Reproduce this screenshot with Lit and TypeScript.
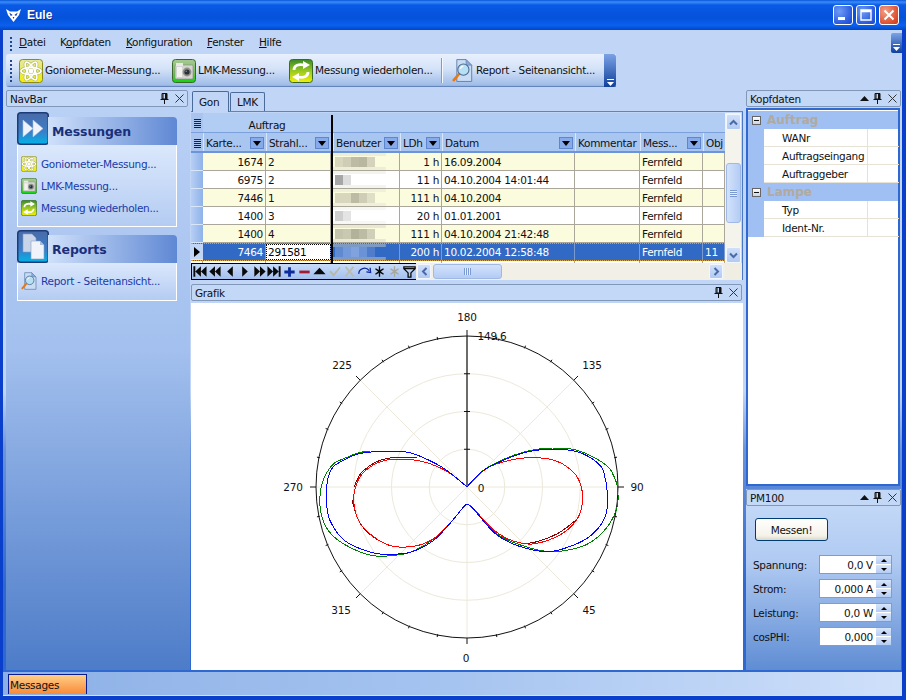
import { LitElement, html, css, svg } from "lit";
import { customElement } from "lit/decorators.js";

const atom = (s: number) => html`<svg width=${s} height=${s} viewBox="0 0 24 24"><defs><linearGradient id="ya" x1="0" y1="0" x2="0" y2="1"><stop offset="0" stop-color="#e6ea9c"/><stop offset=".55" stop-color="#e8ea50"/><stop offset="1" stop-color="#f2f000"/></linearGradient></defs><rect x=".5" y=".5" width="23" height="23" rx="3" fill="url(#ya)" stroke="#8a8a20"/><g fill="none" stroke="#a8ae50" stroke-width="2.8"><ellipse cx="12" cy="12" rx="10" ry="3.6"/><ellipse cx="12" cy="12" rx="10" ry="3.6" transform="rotate(60 12 12)"/><ellipse cx="12" cy="12" rx="10" ry="3.6" transform="rotate(120 12 12)"/></g><g fill="none" stroke="#fff" stroke-width="1.7"><ellipse cx="12" cy="12" rx="10" ry="3.6"/><ellipse cx="12" cy="12" rx="10" ry="3.6" transform="rotate(60 12 12)"/><ellipse cx="12" cy="12" rx="10" ry="3.6" transform="rotate(120 12 12)"/></g><circle cx="12" cy="12" r="2.4" fill="#fff"/></svg>`;
const camera = (s: number) => html`<svg width=${s} height=${s} viewBox="0 0 24 24"><defs><linearGradient id="gc" x1="0" y1="0" x2="0" y2="1"><stop offset="0" stop-color="#a8c898"/><stop offset=".6" stop-color="#70c050"/><stop offset="1" stop-color="#08d808"/></linearGradient></defs><rect x=".5" y=".5" width="23" height="23" rx="3" fill="url(#gc)" stroke="#3a6a2a"/><rect x="3" y="6" width="18" height="14" rx="1" fill="#d4d4d0" stroke="#85857f" stroke-width=".6"/><rect x="4" y="4" width="7" height="3" fill="#e8e8e4"/><rect x="5" y="8" width="5" height="10" fill="#f2f2ee"/><circle cx="15" cy="13" r="4.4" fill="#8e9088"/><circle cx="15" cy="13" r="2.6" fill="#2c3034"/><circle cx="14.2" cy="12.2" r=".8" fill="#7090b0"/></svg>`;
const refresh = (s: number) => html`<svg width=${s} height=${s} viewBox="0 0 24 24"><defs><linearGradient id="gr" x1="0" y1="0" x2="0" y2="1"><stop offset="0" stop-color="#3a8a28"/><stop offset=".5" stop-color="#9ac820"/><stop offset="1" stop-color="#f4f200"/></linearGradient></defs><rect x=".5" y=".5" width="23" height="23" rx="3" fill="url(#gr)" stroke="#3a6a2a"/><g fill="none" stroke="#fff" stroke-width="2.8"><path d="M5 11 C5 6 10 5 15 6"/><path d="M19 13 C19 18 14 19 9 18"/></g><path d="M14 2 L21 6 L14 10 Z" fill="#fff"/><path d="M10 14 L3 18 L10 22 Z" fill="#fff"/></svg>`;
const report = (s: number) => html`<svg width=${s} height=${s + 2} viewBox="0 0 24 26"><path d="M5.5 .5 H16 L22.5 7 V25.5 H5.5 Z" fill="#c8dcf4" stroke="#5a78a8"/><path d="M16 .5 V7 H22.5 Z" fill="#88a8d8" stroke="#5a78a8" stroke-width=".6"/><path d="M2 24 L8 17" stroke="#e87810" stroke-width="3" stroke-linecap="round"/><circle cx="13" cy="12" r="6.4" fill="#b8e0f4" stroke="#4a6a90" stroke-width="1.2"/><path d="M9.5 11 A4 4 0 0 1 13 8" stroke="#fff" stroke-width="1.4" fill="none"/></svg>`;
const bigArrows = html`<svg width="32" height="33" viewBox="0 0 32 33"><defs><linearGradient id="bi" x1="0" y1="0" x2="0" y2="1"><stop offset="0" stop-color="#4a6aa8"/><stop offset=".6" stop-color="#3a7ec8"/><stop offset="1" stop-color="#00b4e8"/></linearGradient></defs><rect x=".75" y=".75" width="30.5" height="31.5" rx="3" fill="url(#bi)" stroke="#1c3c78" stroke-width="1.5"/><path d="M6 8 L16 16.5 L6 25 Z M16 8 L26 16.5 L16 25 Z" fill="#f0f4fa" stroke="#a8c0e0" stroke-width=".6"/></svg>`;
const bigPages = html`<svg width="32" height="33" viewBox="0 0 32 33"><rect x=".75" y=".75" width="30.5" height="31.5" rx="3" fill="url(#bi)" stroke="#1c3c78" stroke-width="1.5"/><path d="M6 4 H15 L19 8 V22 H6 Z" fill="#c8d4e8" stroke="#8aa0c0" stroke-width=".6"/><path d="M14 11 H23 L27 15 V29 H14 Z" fill="#f0f4fa" stroke="#8aa0c0" stroke-width=".6"/><path d="M23 11 V15 H27 Z" fill="#a8bcd8"/></svg>`;
const owl = html`<svg width="15" height="13" viewBox="0 0 15 13"><path d="M0 0 L4 2.5 H11 L15 0 L13 6 L7.5 13 L2 6 Z" fill="#fff"/><path d="M3.2 3.6 L6.6 6 L4.8 7 Z M11.8 3.6 L8.4 6 L10.2 7 Z M6.6 8 H8.4 L7.5 10 Z" fill="#0a3ab0"/></svg>`;
const pin = html`<svg class="hico" width="9" height="11" viewBox="0 0 9 11"><path d="M2 0.5 H7 V6 H2 Z M3 1 V6 M0.5 6.5 H8.5 M4.5 7 V11" fill="none" stroke="#111" stroke-width="1"/><rect x="5" y="1" width="2" height="5" fill="#111"/></svg>`;
const closeX = html`<svg class="hico" width="9" height="9" viewBox="0 0 9 9"><path d="M.5 .5 L8.5 8.5 M8.5 .5 L.5 8.5" stroke="#333" stroke-width="1"/></svg>`;
const upTri = html`<svg class="hico" width="9" height="5" viewBox="0 0 9 5"><path d="M4.5 0 L9 5 H0 Z" fill="#111"/></svg>`;
const chev = html`<svg width="9" height="9" viewBox="0 0 9 9"><path d="M1 1 H8 V2 H1 Z" fill="#fff"/><path d="M1 4 H8 L4.5 8 Z" fill="#fff"/></svg>`;

const navIcons: [string, string, string][] = [
  ["M1 2 H3 V13 H1 Z M9 2 V13 L3 7.5 Z M15 2 V13 L9 7.5 Z", "#0a0a0a", ""],
  ["M8 2 V13 L2 7.5 Z M14 2 V13 L8 7.5 Z", "#0a0a0a", ""],
  ["M11 2 V13 L5 7.5 Z", "#0a0a0a", ""],
  ["M5 2 V13 L11 7.5 Z", "#0a0a0a", ""],
  ["M2 2 V13 L8 7.5 Z M8 2 V13 L14 7.5 Z", "#0a0a0a", ""],
  ["M0 2 V13 L6 7.5 Z M6 2 V13 L12 7.5 Z M12 2 H14 V13 H12 Z", "#0a0a0a", ""],
  ["M6 3 H9 V6.5 H13 V9.5 H9 V13 H6 V9.5 H2 V6.5 H6 Z", "#0c2c9c", ""],
  ["M2 6.5 H13 V9.5 H2 Z", "#a01c30", ""],
  ["M7.5 3.5 L14 10.5 H1 Z", "#0a0a0a", ""],
  ["M2 8 L3.5 6.5 L6.5 10 L13 2.5 L14 3.5 L6.5 13 Z", "#b8b8a8", ""],
  ["M2.5 3 L4 2 L7.5 6 L11 2 L12.5 3 L9 7.5 L12.5 12 L11 13 L7.5 9 L4 13 L2.5 12 L6 7.5 Z", "#bcbcb0", ""],
  ["", "#0c2c9c", "M1.5 10 C1 4 9 2 12.5 6.5 M9.5 8 L14 8.5 L13.5 3.5"],
  ["M6.8 2 H8.2 V6 L11.5 4 L12.2 5.2 L9 7.5 L12.2 9.8 L11.5 11 L8.2 9 V13 H6.8 V9 L3.5 11 L2.8 9.8 L6 7.5 L2.8 5.2 L3.5 4 L6.8 6 Z", "#0a0a0a", ""],
  ["M6.8 2 H8.2 V6 L11.5 4 L12.2 5.2 L9 7.5 L12.2 9.8 L11.5 11 L8.2 9 V13 H6.8 V9 L3.5 11 L2.8 9.8 L6 7.5 L2.8 5.2 L3.5 4 L6.8 6 Z", "#a8a89c", ""],
  ["", "#0a0a0a", "M1.5 2.5 H13.5 V4.5 L9 9 V13.5 H6 V9 L1.5 4.5 Z M1.5 4.5 H13.5"],
];

const rows = [
  { k: "1674", s: "2", l: "1 h", d: "16.09.2004", m: "Fernfeld", o: "", mos: ["#d8d7be", "#cfcdb5", "#bdbba3", "#b9b7a0", "#d5d3bb"], band: "#eeedd8" },
  { k: "6975", s: "2", l: "11 h", d: "04.10.2004 14:01:44", m: "Fernfeld", o: "", mos: ["#a6a6a6", "#dcdcdc"], band: "#f4f4ee" },
  { k: "7446", s: "1", l: "111 h", d: "04.10.2004", m: "Fernfeld", o: "", mos: ["#d8d7be", "#d8d7be", "#bdbba3", "#cfcdb5", "#dfdec6"], band: "#f0efd9" },
  { k: "1400", s: "3", l: "20 h", d: "01.01.2001", m: "Fernfeld", o: "", mos: ["#cfcfcf", "#e4e4e4"], band: "#f7f7f4" },
  { k: "1400", s: "4", l: "111 h", d: "04.10.2004 21:42:48", m: "Fernfeld", o: "", mos: ["#c4c3ab", "#c9c8b0", "#b2b19a", "#bcbba3", "#d0cfb7"], band: "#e9e8d2" },
  { k: "7464", s: "291581", l: "200 h", d: "10.02.2004 12:58:48", m: "Fernfeld", o: "11", mos: ["#5f8ad2", "#7399da", "#80a2de", "#6a92d6", "#4f7ccb"], band: "#7d9ac4" },
];

const blue = [[467,487],[482,470],[508,458],[525,452],[545,449],[575,450],[592,458],[603,468],[605,478],[607,487],[608,508],[603,523],[590,537],[575,545],[550,553],[522,548],[498,537],[485,523],[472,507],[467,504],[465,505],[457,515],[447,527],[433,542],[413,552],[400,554],[380,555],[357,548],[343,540],[335,530],[328,517],[326,500],[327,480],[332,467],[340,462],[360,452],[400,451],[413,453],[433,462],[447,470],[467,487]];
const green = [[467,487],[482,470],[508,457],[527,451],[545,448],[565,448],[582,451],[608,465],[614,476],[618,487],[618,508],[608,527],[595,540],[580,548],[550,553],[522,546],[498,536],[485,522],[472,506],[467,504],[465,505],[457,515],[447,527],[433,540],[413,552],[400,555],[373,557],[350,548],[333,537],[323,523],[319,503],[322,480],[333,463],[343,459],[362,451],[385,451],[400,451],[413,453],[433,462],[447,470],[467,487]];
const red = [[467,487],[485,468],[505,461],[528,457],[555,459],[575,472],[582,487],[583,503],[578,520],[562,535],[538,544],[522,544],[502,537],[485,522],[472,507],[467,504],[465,505],[457,515],[447,527],[433,540],[415,547],[390,547],[370,535],[357,520],[353,500],[355,487],[362,472],[383,459],[417,459],[447,470],[467,487]];
const dark = [[467,487],[485,468],[505,460],[528,456],[555,458],[575,471],[581,487],[582,505],[576,520],[560,533],[538,542],[522,544],[502,536],[485,522],[472,507],[467,504],[465,505],[457,515],[447,526],[433,539],[415,546],[390,546],[372,537],[358,522],[352,500],[354,487],[361,471],[384,457],[417,458],[447,470],[467,487]];
const darkParts = [dark.slice(8, 12), dark.slice(21, 25), dark.slice(25, 29)];
const smooth = (p: number[][]) => {
  let cur = p;
  for (let it = 0; it < 2; it++) {
    const out: number[][] = [cur[0]];
    for (let i = 0; i < cur.length - 1; i++) {
      const a = cur[i], b = cur[i + 1];
      out.push([0.75 * a[0] + 0.25 * b[0], 0.75 * a[1] + 0.25 * b[1]]);
      out.push([0.25 * a[0] + 0.75 * b[0], 0.25 * a[1] + 0.75 * b[1]]);
    }
    out.push(cur[cur.length - 1]);
    cur = out;
  }
  return cur;
};
const pts = (p: number[][]) => smooth(p).map((q) => q.map((v) => v.toFixed(1)).join(",")).join(" ");

const chart = () => {
  const cx = 467, cy = 487, R = 151;
  const spokes = [0, 45, 90, 135, 180, 225, 270, 315];
  const ticks = [];
  for (let i = 0; i < 32; i++) {
    const a = (i * 11.25 * Math.PI) / 180;
    const big = i % 4 === 0;
    const r1 = R - (big ? 0 : 1), r2 = R + (big ? 6 : 2);
    ticks.push(svg`<line x1=${cx + r1 * Math.sin(a)} y1=${cy - r1 * Math.cos(a)} x2=${cx + r2 * Math.sin(a)} y2=${cy - r2 * Math.cos(a)} stroke="#111"/>`);
  }
  const labels: [string, number, number][] = [["180",467,321],["135",592,369],["90",637,491],["45",589,614],["0",466,662],["315",341,614],["270",293,491],["225",342,369],["0",481,492],["149,6",492,340]];
  return html`<svg class="chart" width="552" height="367" viewBox="191 303 552 367">
    ${[37.75, 75.5, 113.25].map((r) => svg`<circle cx=${cx} cy=${cy} r=${r} fill="none" stroke="#ece8da"/>`)}
    ${spokes.map((d) => { const a = (d * Math.PI) / 180; return svg`<line x1=${cx} y1=${cy} x2=${cx + R * Math.sin(a)} y2=${cy - R * Math.cos(a)} stroke="#ece8da"/>`; })}
    <circle cx=${cx} cy=${cy} r=${R} fill="none" stroke="#111"/>
    ${ticks}
    <line x1=${cx} y1=${cy} x2=${cx} y2=${cy - R} stroke="#111" stroke-width="1.2"/>
    ${[1, 2, 3].map((i) => svg`<line x1=${cx - 3} y1=${cy - 37.75 * i} x2=${cx + 3} y2=${cy - 37.75 * i} stroke="#111"/>`)}
    <g class="curves">
      <polyline points=${pts(green)} fill="none" stroke="#008000"/>
      ${darkParts.map((p) => svg`<polyline points=${pts(p)} fill="none" stroke="#8a0000"/>`)}
      <polyline points=${pts(red)} fill="none" stroke="#ff0000"/>
      <polyline points=${pts(blue)} fill="none" stroke="#0000ff"/>
    </g>
    ${labels.map(([t, x, y]) => svg`<text x=${x} y=${y} text-anchor="middle">${t}</text>`)}
  </svg>`;
};

@customElement("app-root")
export class AppRoot extends LitElement {
  static styles = css`
    :host { display: block; width: 906px; height: 700px; font: 10.5px "DejaVu Sans", sans-serif; color: #111; overflow: hidden; letter-spacing: -0.3px; }
    svg { display: block; flex: none; }
    .window { width: 906px; height: 700px; display: flex; flex-direction: column; background: #0a3fcb; }
    .title { height: 30px; flex: none; display: flex; align-items: center; padding: 0 7px 0 6px; gap: 6px; background: linear-gradient(#0a56d8 0, #3a8cf8 2px, #0a5ae6 5px, #0552da 60%, #0a60ee 85%, #0344c4 100%); }
    .title b { font: bold 12px "Liberation Sans", sans-serif; letter-spacing: 0; color: #fff; text-shadow: 1px 1px 0 #0a2a90; flex: 1; }
    .wbtns { display: flex; gap: 3px; }
    .wb { width: 20px; height: 20px; border: 1px solid #fff; border-radius: 3px; background: radial-gradient(circle at 30% 30%, #6f9cf4, #2a5ae0 70%, #1c48c8); box-sizing: border-box; display: flex; align-items: center; justify-content: center; }
    .wb.x { background: radial-gradient(circle at 30% 30%, #f0a088, #dd5030 70%, #c83c18); }
    .client { flex: 1; min-height: 0; margin: 0 4px 4px 3px; display: flex; flex-direction: column; background: #c1d6f6; }
    .menubar { height: 24px; flex: none; display: flex; align-items: center; padding-left: 7px; }
    .grip { width: 2px; height: 2px; flex: none; background: #1f4690; box-shadow: 0 4px 0 #1f4690, 0 8px 0 #1f4690, 0 -4px 0 #1f4690; }
    .menus { display: flex; margin-left: 7px; flex: 1; }
    .menus span { display: block; }
    .menus span u { text-decoration: underline; }
    .m1 { width: 41px; } .m2 { width: 66px; } .m3 { width: 81px; } .m4 { width: 52px; } .m5 { width: 40px; }
    .mchev { width: 11px; height: 20px; margin-top: 1px; background: linear-gradient(#7ba2e4, #10409c); display: flex; align-items: flex-end; justify-content: center; border-radius: 2px 0 0 2px; padding-bottom: 1px; box-sizing: border-box; }
    .toolrow { height: 33px; flex: none; display: flex; padding-left: 3px; }
    .toolbar { width: 610px; display: flex; align-items: center; background: linear-gradient(#e8f0fd, #d4e2f8 45%, #9fbce8 95%, #4a6eaa 100%); border-radius: 3px 0 0 3px; position: relative; padding-left: 4px; box-sizing: border-box; }
    .toolbar .grip { box-shadow: 0 4px 0 #1f4690, 0 8px 0 #1f4690, 0 -4px 0 #1f4690, 0 -8px 0 #1f4690, 0 12px 0 #1f4690; margin-right: 7px; margin-top: -4px; }
    .tb { display: flex; align-items: center; gap: 2px; white-space: nowrap; }
    .tb span { margin-top: -2px; }
    .tb1 { width: 153px; } .tb2 { width: 117px; } .tb3 { width: 152px; }
    .sep { width: 1px; height: 25px; background: #7c9ccc; border-right: 1px solid #f4f8ff; margin-right: 9px; }
    .tb4 { gap: 3px; flex: 1; }
    .tchev { width: 12px; align-self: stretch; flex: none; background: linear-gradient(#7ba2e4, #10409c); border-radius: 0 3px 3px 0; display: flex; align-items: flex-end; justify-content: center; }
    .dock { flex: 1; min-height: 0; display: flex; background: linear-gradient(#c1d6f6 0, #c1d6f6 52%, #6a95dc 62%, #2f68d0 85%, #2f68d0 100%); padding-bottom: 2px; }
    .left { width: 184px; margin-left: 3px; flex: none; display: flex; flex-direction: column; background: linear-gradient(#bcd2f6, #a3c0ee 45%, #4d7cc8); padding-top: 3px; box-sizing: border-box; }
    .ph { height: 17px; flex: none; box-sizing: border-box; margin: 0 2px 0 0; border: 1px solid #8298b8; border-radius: 2px; display: flex; align-items: center; gap: 4px; padding: 0 3px; background: #c3d8f7; }
    .ph span { flex: 1; }
    .hico { flex: none; }
    .hico:last-child { margin-left: 2px; }
    .pane { margin: 6px 13px 0 11px; display: flex; flex-direction: column; flex: none; }
    .pane + .pane { margin-top: 4px; }
    .ptop { height: 32px; display: flex; align-items: flex-end; }
    .ptitle { flex: 1; height: 28px; margin-left: -1px; box-sizing: border-box; display: flex; align-items: center; padding-left: 4px; font: bold 12.5px "DejaVu Sans", sans-serif; letter-spacing: -0.1px; color: #1a2f7a; background: linear-gradient(90deg, #cfe0fa, #5f88d4); border-radius: 0 4px 0 0; }
    .pbody { border: 1px solid #fff; border-top: none; background: linear-gradient(#dbe8fc, #b4ccf2); padding: 11px 0 0 3px; display: flex; flex-direction: column; gap: 6px; box-sizing: border-box; }
    .p1 { height: 82px; } .p2 { height: 38px; padding-top: 10px; }
    .pi { display: flex; align-items: center; gap: 4px; color: #1a3aa8; height: 16px; }
    .center { width: 552px; margin-left: 1px; flex: none; display: flex; flex-direction: column; }
    .tabs { height: 25px; flex: none; display: flex; align-items: flex-end; padding-left: 1px; border-bottom: 1px solid #5b83c8; box-sizing: border-box; }
    .tab { height: 19px; box-sizing: border-box; padding: 0 6px; display: flex; align-items: center; border: 1px solid #4a6a9a; border-bottom: none; border-radius: 2px 2px 0 0; margin-right: 1px; }
    .tab.on { height: 21px; background: #c1d6f6; margin-bottom: -1px; width: 37px; padding: 0 6px; }
    .grid { flex: none; height: 168px; display: flex; border-right: 1px solid #4a78c8; background: #c1d6f6; position: relative; padding-top: 1px; box-sizing: border-box; }
    .gmain { width: 534px; flex: none; display: flex; flex-direction: column; position: relative; }
    .thick { position: absolute; left: 140px; top: 2px; width: 2px; height: 148px; background: #000; z-index: 3; }
    .r { display: grid; grid-template-columns: 12px 63px 65px 2px 67px 42px 133px 65px 63px 22px; flex: none; box-sizing: border-box; }
    .group { height: 20px; background: #b2cdf3; border-bottom: 1px solid #7ba0dc; }
    .group .sel, .hdr .sel { background: #a8c4ef; display: flex; align-items: center; justify-content: center; padding-top: 2px; box-sizing: border-box; }
    .ag { grid-column: 2 / 4; text-align: center; align-self: center; padding-top: 4px; }
    .gl { width: 7px; height: 9px; background: repeating-linear-gradient(#222 0 1px, transparent 1px 2px); border-left: 1px dotted #222; box-sizing: border-box; }
    .hdr { height: 20px; background: #a9c6f1; border-bottom: 2px solid #6e94d8; }
    .h { display: flex; align-items: center; overflow: hidden; white-space: nowrap; padding: 2px 0 0 2px; border-left: 1px solid #d8e6fa; box-sizing: border-box; }
    .h span { flex: 1; overflow: hidden; }
    .dd { width: 14px; height: 12px; flex: none; margin-right: 2px; background: #86aaea; border: 1px solid #5d86cc; box-sizing: border-box; display: flex; align-items: center; justify-content: center; }
    .dd i { width: 0; height: 0; border: 4px solid transparent; border-top: 5px solid #000; border-bottom: none; }
    .row { height: 18px; background: #fff; }
    .row.alt { background: #fbfbde; }
    .c { display: flex; align-items: center; border-right: 1px solid #aaa79a; border-bottom: 1px solid #aaa79a; padding: 0 2px; box-sizing: border-box; overflow: hidden; white-space: nowrap; }
    .c.n { justify-content: flex-end; }
    .sel2 { background: linear-gradient(90deg, #b6cff4, #8fb2ea); border-bottom: 1px solid #d8e6fa; display: flex; align-items: center; justify-content: center; }
    .sel2 i { width: 0; height: 0; border: 5px solid transparent; border-left: 6px solid #000; border-right: none; }
    .row.cur { background: #316ac5; color: #fff; border-top: 1px dotted #e0a040; border-bottom: 1px dotted #e0a040; }
    .row.cur .c { border-bottom: none; border-right-color: #7a9ad0; }
    .row.cur .sel2 { background: #c1d6f6; }
    .row.cur .edit { background: #fff; color: #000; outline: 1px dotted #000; outline-offset: -1px; }
    .blur { display: flex; padding: 0 0 0 2px; align-items: center; background-repeat: no-repeat; }
    .mos { width: 8px; height: 10px; flex: none; }
    .partial { height: 2px; display: grid; grid-template-columns: 12px 63px 65px 2px 67px 42px 133px 65px 63px 22px; background: #fff; }
    .partial b { border-right: 1px solid #aaa79a; }
    .navrow { flex: 1; display: flex; height: 17px; min-height: 0; }
    .nav { display: flex; border: 1px solid #000; height: 17px; box-sizing: border-box; background: #a9c6f1; width: 225px; flex: none; }
    .nb { width: 15px; height: 15px; flex: none; background: linear-gradient(#c8dbf8, #a3c0ee); }
    .hs { flex: 1; display: flex; align-items: center; background: #f2f0e6; height: 17px; padding: 0 2px 0 1px; box-sizing: border-box; }
    .sb { width: 14px; height: 15px; flex: none; box-sizing: border-box; border: 1px solid #f2f6fe; border-radius: 2px; background: linear-gradient(#d0e0fa, #b2caf2); display: flex; align-items: center; justify-content: center; }
    .hthumb { width: 69px; height: 15px; margin: 0 auto 0 2px; flex: none; box-sizing: border-box; border: 1px solid #a0b8e4; border-radius: 3px; background: linear-gradient(#d2e2fb, #b4ccf4); display: flex; align-items: center; justify-content: center; }
    .vs { width: 16px; flex: none; background: #f4f3ec; display: flex; flex-direction: column; align-items: center; padding-top: 1px; box-sizing: border-box; height: 150px; }
    .vs .sb { height: 16px; width: 15px; }
    .vthumb { width: 15px; height: 60px; margin: 33px 0 auto; box-sizing: border-box; border: 1px solid #a0b8e4; border-radius: 3px; background: linear-gradient(90deg, #d2e2fb, #b4ccf4); display: flex; align-items: center; justify-content: center; }
    .corner { height: 17px; background: #f0eee2; }
    .vwrap { display: flex; flex-direction: column; width: 17px; flex: none; }
    .lines-h { width: 7px; height: 7px; background: repeating-linear-gradient(90deg, #7a9ad0 0 1px, #e6eefc 1px 2px); }
    .lines-v { width: 7px; height: 7px; background: repeating-linear-gradient(#7a9ad0 0 1px, #e6eefc 1px 2px); }
    .grafik { height: 17px; margin: 4px 1px 1px 0; }
    .cwrap { flex: 1; min-height: 0; background: #fff; margin: 1px 0 0; }
    .chart text { font: 10.5px "DejaVu Sans", sans-serif; letter-spacing: -0.2px; fill: #111; }
    .curves polyline { shape-rendering: crispEdges; }
    .right { width: 155px; margin-left: 3px; flex: none; display: flex; flex-direction: column; padding-top: 3px; box-sizing: border-box; }
    .right .ph { margin: 0; }
    .pgrid { height: 378px; margin-top: 1px; flex: none; box-sizing: border-box; border: 2px solid #2f68d0; background: #fff; padding-top: 1px; display: flex; flex-direction: column; width: 154px; }
    .pg { display: grid; grid-template-columns: 16px 104px 31px; height: 18px; flex: none; }
    .pg.g { background: #a0bff2; align-items: center; color: #b0aaa0; font-weight: bold; font-size: 12px; letter-spacing: 0; }
    .pg .lc { background: #a0bff2; display: flex; align-items: center; justify-content: center; height: 100%; }
    .pm { width: 9px; height: 9px; box-sizing: border-box; border: 1px solid #666; background: linear-gradient(#fff, #c8d4e8); position: relative; }
    .pm::after { content: ""; position: absolute; left: 1px; right: 1px; top: 3px; height: 1px; background: #111; }
    .pg .v1 { border-bottom: 1px solid #e6e3d6; border-right: 1px solid #e6e3d6; padding-left: 18px; display: flex; align-items: center; box-sizing: border-box; }
    .pg .v2 { border-bottom: 1px solid #e6e3d6; }
    .pgroup { grid-column: 2 / 4; padding-left: 3px; }
    .pm100 { flex: 1; min-height: 0; margin-top: 3px; display: flex; flex-direction: column; background: linear-gradient(#c8dcf8, #b0caf2 40%, #5f8dd4); }
    .pmb { flex: 1; display: flex; flex-direction: column; padding: 12px 0 0 7px; }
    .btn { width: 73px; height: 23px; margin-left: 2px; box-sizing: border-box; border: 1px solid #003c74; border-radius: 3px; background: linear-gradient(#fff, #f4f2e8 80%, #dcd8c8); display: flex; align-items: center; justify-content: center; margin-bottom: 14px; }
    .sp { display: flex; align-items: center; justify-content: space-between; height: 19px; margin-bottom: 5px; padding-right: 9px; }
    .spin { width: 73px; height: 19px; box-sizing: border-box; border: 1px solid #9a9a90; background: #fff; display: flex; align-items: stretch; }
    .spin span { flex: 1; text-align: right; padding-right: 3px; align-self: center; }
    .spb { width: 15px; flex: none; display: flex; flex-direction: column; gap: 1px; }
    .spb i { flex: 1; background: linear-gradient(#d8e6fb, #b4ccf4); display: flex; align-items: center; justify-content: center; }
    .tu { width: 0; height: 0; border: 3px solid transparent; border-bottom: 3px solid #000; border-top: none; }
    .td { width: 0; height: 0; border: 3px solid transparent; border-top: 3px solid #000; border-bottom: none; }
    .status { height: 24px; flex: none; display: flex; align-items: flex-end; padding: 0 0 1px 5px; background: linear-gradient(90deg, #8cb0e6, #a6c4f0 50%, #cfe0fa); border-bottom: 1px solid #d0e0fa; box-sizing: border-box; }
    .msg { width: 79px; height: 20px; box-sizing: border-box; border: 1px solid #0a1c90; border-bottom: none; background: linear-gradient(#ffcf88, #f88a38); padding-left: 1px; display: flex; align-items: center; color: #111; }
  `;

  header(t: string, up = false) {
    return html`<div class="ph"><span>${t}</span>${up ? upTri : ""}${pin}${closeX}</div>`;
  }
  hcell(t: string, dd = true) {
    return html`<div class="h"><span>${t}</span>${dd ? html`<div class="dd"><i></i></div>` : ""}</div>`;
  }
  spin(label: string, v: string) {
    return html`<div class="sp"><span>${label}</span><div class="spin"><span>${v}</span><div class="spb"><i><b class="tu"></b></i><i><b class="td"></b></i></div></div></div>`;
  }
  bandStyle(band: string) {
    const g = `linear-gradient(${band},${band})`;
    return `background-image:${g},${g};background-size:80% 3px,80% 3px;background-position:left top,left bottom`;
  }

  render() {
    return html`<div class="window">
      <div class="title">${owl}<b>Eule</b>
        <div class="wbtns">
          <div class="wb"><svg width="12" height="12" viewBox="0 0 12 12"><rect x="1" y="8" width="7" height="3" fill="#fff"/></svg></div>
          <div class="wb"><svg width="12" height="12" viewBox="0 0 12 12"><path d="M1 1 H11 V11 H1 Z M1 2.5 H11" fill="none" stroke="#fff" stroke-width="1.4"/></svg></div>
          <div class="wb x"><svg width="12" height="12" viewBox="0 0 12 12"><path d="M1.5 1.5 L10.5 10.5 M10.5 1.5 L1.5 10.5" stroke="#fff" stroke-width="2"/></svg></div>
        </div>
      </div>
      <div class="client">
        <div class="menubar"><div class="grip"></div>
          <div class="menus">
            <span class="m1"><u>D</u>atei</span><span class="m2">K<u>o</u>pfdaten</span><span class="m3"><u>K</u>onfiguration</span><span class="m4"><u>F</u>enster</span><span class="m5"><u>H</u>ilfe</span>
          </div>
          <div class="mchev">${chev}</div>
        </div>
        <div class="toolrow"><div class="toolbar"><div class="grip"></div>
          <div class="tb tb1">${atom(24)}<span>Goniometer-Messung...</span></div>
          <div class="tb tb2">${camera(24)}<span>LMK-Messung...</span></div>
          <div class="tb tb3">${refresh(24)}<span>Messung wiederholen...</span></div>
          <div class="sep"></div>
          <div class="tb tb4">${report(21)}<span>Report - Seitenansicht...</span></div>
          <div class="tchev">${chev}</div>
        </div></div>
        <div class="dock">
          <div class="left">
            ${this.header("NavBar")}
            <div class="pane">
              <div class="ptop">${bigArrows}<div class="ptitle">Messungen</div></div>
              <div class="pbody p1">
                <div class="pi">${atom(16)}<span>Goniometer-Messung...</span></div>
                <div class="pi">${camera(16)}<span>LMK-Messung...</span></div>
                <div class="pi">${refresh(16)}<span>Messung wiederholen...</span></div>
              </div>
            </div>
            <div class="pane">
              <div class="ptop">${bigPages}<div class="ptitle">Reports</div></div>
              <div class="pbody p2"><div class="pi">${report(16)}<span>Report - Seitenansicht...</span></div></div>
            </div>
          </div>
          <div class="center">
            <div class="tabs"><div class="tab on">Gon</div><div class="tab">LMK</div></div>
            <div class="grid">
              <div class="gmain">
                <div class="thick"></div>
                <div class="r group"><div class="sel"><div class="gl"></div></div><div class="ag">Auftrag</div></div>
                <div class="r hdr"><div class="sel"><div class="gl"></div></div>
                  ${this.hcell("Karte...")}${this.hcell("Strahl...")}<div></div>${this.hcell("Benutzer")}${this.hcell("LDh")}${this.hcell("Datum")}${this.hcell("Kommentar", false)}${this.hcell("Mess...")}${this.hcell("Obj", false)}
                </div>
                ${rows.map((r, i) => {
                  const cur = i === 5;
                  return html`<div class="r row ${i % 2 === 0 ? "alt" : ""} ${cur ? "cur" : ""}">
                    <div class="sel2">${cur ? html`<i></i>` : ""}</div>
                    <div class="c n">${r.k}</div><div class="c edit">${r.s}</div><div></div>
                    <div class="c blur" style=${this.bandStyle(r.band)}>${r.mos.map((m) => html`<div class="mos" style="background:${m}"></div>`)}</div>
                    <div class="c n">${r.l}</div><div class="c">${r.d}</div><div class="c"></div><div class="c">${r.m}</div><div class="c">${r.o}</div>
                  </div>`;
                })}
                <div class="partial"><b></b><b></b><b></b><i></i><b></b><b></b><b></b><b></b><b></b><b></b></div>
                <div class="navrow">
                  <div class="nav">${navIcons.map(([f, c, s]) => html`<svg class="nb" width="15" height="15" viewBox="-.5 -.5 16 16">${f ? svg`<path d=${f} fill=${c}/>` : ""}${s ? svg`<path d=${s} fill="none" stroke=${c} stroke-width="1.4"/>` : ""}</svg>`)}</div>
                  <div class="hs">
                    <div class="sb"><svg width="7" height="9" viewBox="0 0 7 9"><path d="M5.5 1 L2 4.5 L5.5 8" fill="none" stroke="#4a6aa8" stroke-width="2"/></svg></div>
                    <div class="hthumb"><div class="lines-h"></div></div>
                    <div class="sb"><svg width="7" height="9" viewBox="0 0 7 9"><path d="M1.5 1 L5 4.5 L1.5 8" fill="none" stroke="#4a6aa8" stroke-width="2"/></svg></div>
                  </div>
                </div>
              </div>
              <div class="vwrap">
                <div class="vs">
                  <div class="sb"><svg width="9" height="7" viewBox="0 0 9 7"><path d="M1 5.5 L4.5 2 L8 5.5" fill="none" stroke="#4a6aa8" stroke-width="2"/></svg></div>
                  <div class="vthumb"><div class="lines-v"></div></div>
                  <div class="sb"><svg width="9" height="7" viewBox="0 0 9 7"><path d="M1 1.5 L4.5 5 L8 1.5" fill="none" stroke="#4a6aa8" stroke-width="2"/></svg></div>
                </div>
                <div class="corner"></div>
              </div>
            </div>
            <div class="ph grafik"><span>Grafik</span>${pin}${closeX}</div>
            <div class="cwrap">${chart()}</div>
          </div>
          <div class="right">
            ${this.header("Kopfdaten", true)}
            <div class="pgrid">
              <div class="pg g"><div class="lc"><div class="pm"></div></div><div class="pgroup">Auftrag</div></div>
              ${["WANr", "Auftragseingang", "Auftraggeber"].map((t) => html`<div class="pg"><div class="lc"></div><div class="v1">${t}</div><div class="v2"></div></div>`)}
              <div class="pg g"><div class="lc"><div class="pm"></div></div><div class="pgroup">Lampe</div></div>
              ${["Typ", "Ident-Nr."].map((t) => html`<div class="pg"><div class="lc"></div><div class="v1">${t}</div><div class="v2"></div></div>`)}
            </div>
            <div class="pm100">
              ${this.header("PM100", true)}
              <div class="pmb">
                <div class="btn">Messen!</div>
                ${this.spin("Spannung:", "0,0 V")}${this.spin("Strom:", "0,000 A")}${this.spin("Leistung:", "0,0 W")}${this.spin("cosPHI:", "0,000")}
              </div>
            </div>
          </div>
        </div>
        <div class="status"><div class="msg">Messages</div></div>
      </div>
    </div>`;
  }
}
